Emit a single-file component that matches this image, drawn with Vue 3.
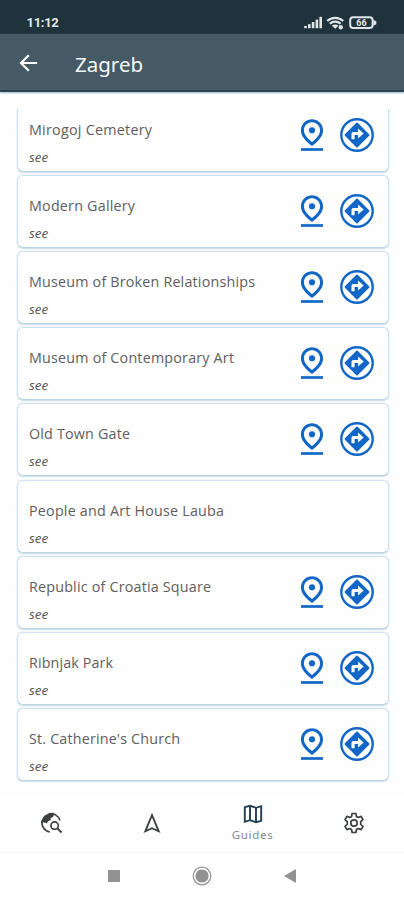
<script setup>
const places = [
  { name: 'Mirogoj Cemetery', w: 123, located: true },
  { name: 'Modern Gallery', w: 106, located: true },
  { name: 'Museum of Broken Relationships', w: 226, located: true },
  { name: 'Museum of Contemporary Art', w: 205, located: true },
  { name: 'Old Town Gate', w: 101, located: true },
  { name: 'People and Art House Lauba', w: 195, located: false },
  { name: 'Republic of Croatia Square', w: 182, located: true },
  { name: 'Ribnjak Park', w: 84, located: true },
  { name: "St. Catherine's Church", w: 151, located: true },
]
</script>

<template>
  <div class="screen">
    <div class="status">
      <span class="clock">11:12</span>
      <svg class="indicators" width="74" height="16" viewBox="0 0 74 16">
        <g fill="#dfe5e8">
          <rect x="1.200" y="10.900" width="2.600" height="2.300" />
          <rect x="5" y="9.200" width="2.600" height="4" />
          <rect x="8.800" y="7" width="2.600" height="6.200" />
          <rect x="12.600" y="4.600" width="2.600" height="8.600" />
          <rect x="16.400" y="1.800" width="2.600" height="11.400" />
        </g>
        <g fill="none" stroke="#dfe5e8" stroke-width="2.200">
          <path d="M24.200 6c4.300-4.300 11.700-4.300 16 0" />
          <path d="M26.800 8.800c3-2.900 7.800-2.900 10.800 0" />
        </g>
        <path d="M28.800 10.600c2-1.600 4.800-1.600 6.800 0l-3.400 3.200z" fill="#dfe5e8" />
        <circle cx="37.800" cy="12.300" r="2.200" fill="#dfe5e8" />
        <rect x="47.200" y="2.300" width="22.400" height="10.800" rx="3" fill="none" stroke="#dfe5e8" stroke-width="2" />
        <path d="M70.300 4.800l3 1.500v2.900l-3 1.500z" fill="#dfe5e8" />
        <text x="58.400" y="11" text-anchor="middle" fill="#dfe5e8" font-size="9" font-weight="700" font-family="Roboto, sans-serif">66</text>
      </svg>
    </div>
    <header class="appbar">
      <svg width="24" height="24" viewBox="0 0 24 24"><path d="M20.200 12H4.500M11.800 4.200L4 12l7.800 7.800" fill="none" stroke="#fff" stroke-width="2.200" /></svg>
      <h1>Zagreb</h1>
    </header>
    <main class="list">
      <article v-for="p in places" :key="p.name" class="card">
        <div class="info">
          <svg class="name" width="240" height="22"><text x="0" y="16" :textLength="p.w">{{ p.name }}</text></svg>
          <div class="kind">see</div>
        </div>
        <div v-if="p.located" class="actions">
          <svg width="38" height="38" viewBox="0 0 24 24" fill="#1267c6">
            <path fill-rule="evenodd" d="M12 2C8.730 2 5 4.460 5 9.150c0 3.120 2.330 6.410 7 9.850 4.670-3.440 7-6.730 7-9.850C19 4.460 15.270 2 12 2zM12 3.900c1.930 0 5.100 1.500 5.100 5.250 0 2.160-1.820 4.670-5.100 7.320-3.280-2.650-5.100-5.160-5.100-7.320C6.900 5.400 10.070 3.900 12 3.900z" />
            <circle cx="12" cy="9" r="1.950" />
            <path d="M5 20.300h14v1.700H5z" />
          </svg>
          <svg width="36" height="36" viewBox="0 0 36 36">
            <circle cx="18" cy="18" r="15.700" fill="none" stroke="#1267c6" stroke-width="2.400" />
            <path d="M18 6.500L29.500 18 18 29.500 6.500 18z" fill="#1267c6" stroke="#1267c6" stroke-width="1.800" stroke-linejoin="round" />
            <path d="M12.500 22.200v-5.400q0-1.700 1.700-1.700h4.800v-3.500l5.700 5-5.700 5v-3.500h-3.400v4.100z" fill="#fff" />
          </svg>
        </div>
      </article>
    </main>
    <nav class="tabs">
      <div class="tab">
        <svg width="24" height="24" viewBox="0 0 24 24">
          <path d="M10.800 21A9.300 9.300 0 0 1 3.300 9.200M9.500 3A9.300 9.300 0 0 1 20.900 9.500" fill="none" stroke="#3c3e40" stroke-width="1.600" />
          <path d="M2.600 11.500C3 5 7.500 2.500 12 2.500c1.300 0 2.400.3 3.200.8l-1.200 2.800-2.300.9v2.200l-2.500.9-1.400 2.400-2-1z" fill="#3c3e40" />
          <circle cx="15.600" cy="14.600" r="3.700" fill="none" stroke="#3c3e40" stroke-width="1.700" />
          <path d="M18.200 17.200l4.300 4.300" stroke="#3c3e40" stroke-width="1.900" />
        </svg>
      </div>
      <div class="tab">
        <svg width="24" height="24" viewBox="0 0 24 24"><path d="M12 4.200L5.300 20.300 12 17.200l6.700 3.100z" fill="none" stroke="#3c3e40" stroke-width="1.800" /></svg>
      </div>
      <div class="tab active">
        <svg width="24" height="24" viewBox="0 0 24 24" fill="none" stroke="#243f50" stroke-width="1.900">
          <path d="M3.800 5.200L9 3.800l6 2 5.200-1.600v14.600L15 20.200l-6-2-5.200 1.600z" />
          <path d="M9 4v14M15 6v14" />
        </svg>
        <span>Guides</span>
      </div>
      <div class="tab">
        <svg width="24" height="24" viewBox="0 0 24 24" fill="none" stroke="#3c3e40" stroke-width="1.700" stroke-linejoin="round">
          <path d="M10.100 2.500h3.800l.5 2.900 1.900 1.100 2.800-1.100 1.900 3.300-2.300 1.900v2.800l2.300 1.900-1.900 3.300-2.800-1.100-1.900 1.100-.5 2.900h-3.800l-.5-2.900-1.900-1.100-2.800 1.100L3 15.300l2.300-1.900v-2.800L3 8.700l1.900-3.300 2.800 1.100 1.900-1.100z" />
          <circle cx="12" cy="12" r="3.200" />
        </svg>
      </div>
    </nav>
    <div class="system">
      <i class="square"></i>
      <svg width="20" height="20" viewBox="0 0 20 20"><circle cx="10" cy="10" r="8.800" fill="none" stroke="#929292" stroke-width="1.200" /><circle cx="10" cy="10" r="6.600" fill="#929292" /></svg>
      <svg width="12" height="14" viewBox="0 0 12 14"><path d="M0 7L12 0v14z" fill="#929292" /></svg>
    </div>
  </div>
</template>

<style>
body { margin: 0; background: #fefefe; }
</style>

<style scoped>
.screen {
  width: 404px;
  height: 900px;
  display: flex;
  flex-direction: column;
  overflow: hidden;
  background: #fefefe;
  font-family: "Noto Sans", "Open Sans", sans-serif;
}
.status {
  box-sizing: border-box;
  height: 34px;
  padding: 15px 27px 0 26.500px;
  display: flex;
  justify-content: space-between;
  background: #1f333d;
}
.clock {
  color: #e4e8ea;
  font: 700 13px/16px Roboto, sans-serif;
  letter-spacing: -0.300px;
}
.appbar {
  box-sizing: border-box;
  height: 58px;
  padding: 1px 17px 0;
  display: flex;
  align-items: center;
  gap: 34px;
  background: #465a65;
  border-bottom: 2px solid #2c4651;
  box-shadow: 0 1px 2px #9db4be;
}
h1 {
  margin: 2px 0 0;
  color: #f4f7f8;
  font: 400 20.500px/28px "Noto Sans", sans-serif;
}
.list {
  box-sizing: border-box;
  height: 684px;
  margin-top: 17px;
  padding: 0 15.500px 12px 16.500px;
  display: flex;
  flex-direction: column;
  justify-content: flex-end;
  gap: 3.150px;
  overflow: hidden;
}
.card {
  box-sizing: border-box;
  flex: none;
  height: 73px;
  padding: 0 12.500px 0 11.500px;
  display: flex;
  justify-content: space-between;
  border: 1.500px solid #cfe2f2;
  border-bottom-color: #bdd5e3;
  border-radius: 6px;
  box-shadow: 0 0 2px #cfe2f0, 0 1px 1px #cbdfea;
  background: #fefefe;
}
.info { padding-top: 19px; }
.name {
  display: block;
  fill: #606060;
  font: 400 14.300px "Open Sans", sans-serif;
}
.kind {
  margin-top: 8px;
  color: #585858;
  font: italic 400 13.500px/16px "Open Sans", sans-serif;
}
.actions {
  height: 38px;
  margin-top: 16px;
  display: flex;
  align-items: center;
  gap: 8px;
}
.tabs {
  box-sizing: border-box;
  height: 60px;
  display: flex;
  border-top: 1px solid #fafafa;
  border-bottom: 1px solid #f5f5f5;
}
.tab {
  flex: 1;
  display: flex;
  flex-direction: column;
  align-items: center;
  justify-content: center;
}
.tab svg { margin-top: -1px; }
.tab span {
  margin-top: 1px;
  color: #858b90;
  font: 400 11.500px/16px "Noto Sans", sans-serif;
  letter-spacing: 0.700px;
}
.system {
  height: 46px;
  padding: 0 108px 0 108px;
  display: flex;
  align-items: center;
  justify-content: space-between;
}
.square { width: 12px; height: 12px; background: #929292; }
</style>
